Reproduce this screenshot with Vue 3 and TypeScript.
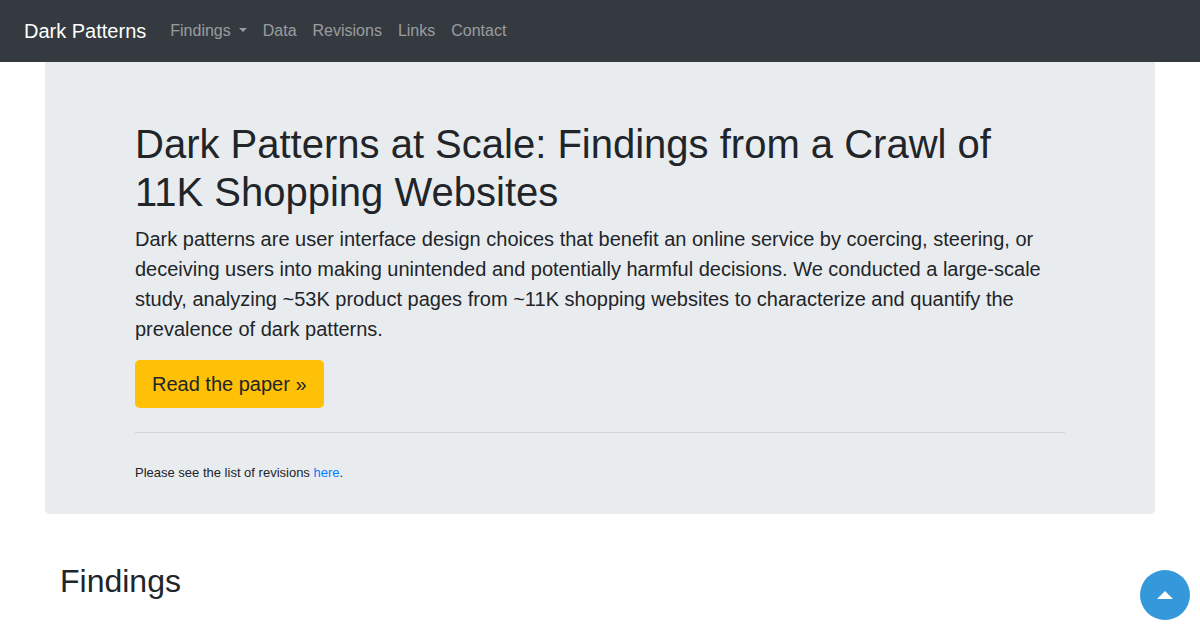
<script setup lang="ts">
const links: string[] = ['Data', 'Revisions', 'Links', 'Contact']
</script>

<template>
  <div class="page">
    <nav class="navbar">
      <a class="brand" href="#">Dark Patterns</a>
      <ul class="nav">
        <li><a href="#" class="nav-link dropdown">Findings</a></li>
        <li v-for="link in links" :key="link"><a href="#" class="nav-link">{{ link }}</a></li>
      </ul>
    </nav>
    <main class="container">
      <section class="jumbotron">
        <h1>Dark Patterns at Scale: Findings from a Crawl of 11K Shopping Websites</h1>
        <p class="lead">Dark patterns are user interface design choices that benefit an online service by coercing, steering, or deceiving users into making unintended and potentially harmful decisions. We conducted a large-scale study, analyzing ~53K product pages from ~11K shopping websites to characterize and quantify the prevalence of dark patterns.</p>
        <a href="#" class="btn">Read the paper »</a>
        <hr />
        <p class="note">Please see the list of revisions <a href="#">here</a>.</p>
      </section>
      <h2>Findings</h2>
    </main>
    <a href="#" class="to-top" aria-label="Back to top">
      <svg width="16" height="8" viewBox="0 0 16 8"><path d="M8 0 L16 8 L0 8 Z" fill="#fff" /></svg>
    </a>
  </div>
</template>

<style>
html, body { margin: 0; background: #fff; overflow: hidden; }
</style>

<style scoped>
.page {
  height: 630px;
  overflow: hidden;
  font-family: "Liberation Sans", Arial, sans-serif;
  color: #212529;
  font-size: 16px;
  line-height: 1.5;
}
.navbar {
  height: 62px;
  box-sizing: border-box;
  background: #343a40;
  display: flex;
  align-items: center;
  padding: 0 16px 0 24px;
}
.brand {
  color: #fff;
  font-size: 20px;
  line-height: 30px;
  text-decoration: none;
  margin-right: 16px;
}
.nav {
  display: flex;
  list-style: none;
  margin: 0;
  padding: 0;
}
.nav-link {
  display: block;
  padding: 8px;
  color: rgba(255, 255, 255, 0.5);
  text-decoration: none;
}
.dropdown::after {
  content: "";
  display: inline-block;
  margin-left: 8px;
  vertical-align: 4px;
  border-top: 4.8px solid;
  border-right: 4.8px solid transparent;
  border-left: 4.8px solid transparent;
}
.container {
  padding: 0 45px;
}
.jumbotron {
  background: #e9ecef;
  border-radius: 0 0 4.8px 4.8px;
  padding: 58px 90px 25px;
}
h1 {
  margin: 0 0 8px;
  font-size: 40px;
  font-weight: 500;
  line-height: 48px;
}
.lead {
  margin: 0 0 16px;
  font-size: 20px;
  line-height: 30px;
}
.btn {
  display: inline-block;
  padding: 8px 17px;
  font-size: 20px;
  line-height: 32px;
  color: #212529;
  background: #ffc107;
  border-radius: 4.8px;
  text-decoration: none;
  vertical-align: top;
}
hr {
  margin: 24px 0;
  border: 0;
  border-top: 1px solid rgba(0, 0, 0, 0.1);
}
.note {
  margin: 0;
  font-size: 13px;
  line-height: 32px;
}
.note a {
  color: #007bff;
  text-decoration: none;
}
h2 {
  margin: 48px 0 0 15px;
  font-size: 32px;
  font-weight: 500;
  line-height: 38px;
}
.to-top {
  position: fixed;
  right: 10px;
  bottom: 10px;
  width: 50px;
  height: 50px;
  border-radius: 50%;
  background: #3498db;
  display: flex;
  align-items: center;
  justify-content: center;
}
</style>
